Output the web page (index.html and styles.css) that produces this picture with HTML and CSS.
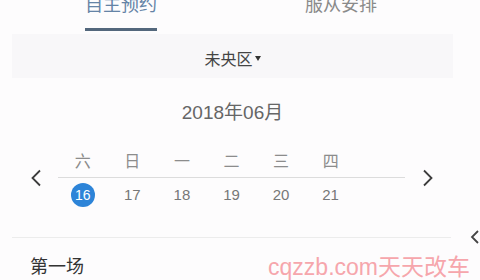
FILE: index.html
```html
<!DOCTYPE html>
<html lang="zh">
<head>
<meta charset="utf-8">
<link rel="stylesheet" href="styles.css">
</head>
<body>
<div class="page">
  <div class="tabs">
    <div class="tab active">自主预约</div>
    <div class="tab">服从安排</div>
  </div>
  <div class="area"><span>未央区</span><span class="caret"></span></div>
  <div class="month">2018年06月</div>
  <div class="week">
    <svg class="chev prev" width="12" height="18" viewBox="0 0 12 18"><path d="M10 1.5 L2.5 9 L10 16.5" fill="none" stroke="#3c3c3c" stroke-width="1.8"/></svg>
    <div class="grid">
      <div class="days">
        <span>六</span><span>日</span><span>一</span><span>二</span><span>三</span><span>四</span><span></span>
      </div>
      <div class="dates">
        <span><b class="sel">16</b></span><span>17</span><span>18</span><span>19</span><span>20</span><span>21</span><span></span>
      </div>
    </div>
    <svg class="chev next" width="12" height="18" viewBox="0 0 12 18"><path d="M2 1.5 L9.5 9 L2 16.5" fill="none" stroke="#3c3c3c" stroke-width="1.8"/></svg>
  </div>
  <div class="divider-row">
    <div class="rule"></div>
    <svg class="peek" width="10" height="14" viewBox="0 0 10 14"><path d="M8 1 L2 7 L8 13" fill="none" stroke="#444" stroke-width="1.8"/></svg>
  </div>
  <div class="session">
    <span class="title">第一场</span>
    <span class="mark">cqzzb.com天天改车</span>
  </div>
</div>
</body>
</html>
```
FILE: styles.css
```css
html, body {
  margin: 0;
  padding: 0;
}
body {
  background: #fdfcfd;
  font-family: "Liberation Sans", "Noto Sans CJK SC", sans-serif;
  color: #555;
}
.page {
  width: 480px;
  height: 280px;
  overflow: hidden;
}
.tabs {
  display: flex;
  gap: 148px;
  padding-left: 85px;
  height: 34px;
}
.tab {
  width: 72px;
  margin-top: -6px;
  font-size: 18px;
  line-height: 18px;
  padding-bottom: 16px;
  text-align: center;
  color: #8a8a8a;
  height: 18px;
  font-family: "Noto Sans CJK SC", sans-serif;
}
.tab.active {
  color: #6483a6;
  border-bottom: 3px solid #53677c;
}
.area {
  margin: 0 27px 0 12px;
  height: 44px;
  box-sizing: border-box;
  padding-top: 4px;
  background: #f8f7f9;
  display: flex;
  align-items: center;
  justify-content: center;
  font-family: "Noto Sans CJK SC", sans-serif;
  font-size: 16px;
  color: #444;
}
.caret {
  width: 0;
  height: 0;
  margin-left: 2px;
  border-left: 3.5px solid transparent;
  border-right: 3.5px solid transparent;
  border-top: 5px solid #333;
}
.month {
  margin: 0 27px 0 12px;
  height: 70px;
  box-sizing: border-box;
  padding-top: 24px;
  line-height: 22px;
  font-size: 19px;
  text-align: center;
  color: #666;
}
.week {
  display: flex;
  align-items: flex-start;
  height: 82px;
}
.chev {
  margin-top: 21px;
}
.prev {
  margin-left: 30px;
}
.grid {
  margin-left: 16px;
  width: 347px;
}
.next {
  margin-left: 17px;
}
.days, .dates {
  display: grid;
  grid-template-columns: repeat(7, 1fr);
  text-align: center;
}
.days {
  height: 29px;
  line-height: 25px;
  font-size: 16px;
  color: #8c8c8c;
  border-bottom: 1px solid #dcdcdc;
  font-family: "Noto Sans CJK SC", sans-serif;
}
.dates {
  margin-top: 5px;
  line-height: 24px;
  font-size: 15px;
  color: #777;
}
.sel {
  display: inline-block;
  width: 24px;
  height: 24px;
  border-radius: 50%;
  background: #2d84d8;
  color: #fff;
  font-weight: normal;
  font-size: 14px;
  line-height: 24px;
}
.divider-row {
  display: flex;
  align-items: center;
  margin-left: 12px;
  height: 14px;
}
.rule {
  width: 441px;
  height: 1px;
  background: #ececec;
}
.peek {
  margin-left: 19px;
  flex: none;
}
.session {
  display: flex;
  justify-content: space-between;
  align-items: center;
  margin-top: 9px;
  padding: 0 10px 0 30px;
  height: 24px;
}
.title {
  font-family: "Noto Sans CJK SC", sans-serif;
  font-size: 18px;
  color: #333;
}
.mark {
  font-size: 23px;
  color: #f6a6ac;
}
```
